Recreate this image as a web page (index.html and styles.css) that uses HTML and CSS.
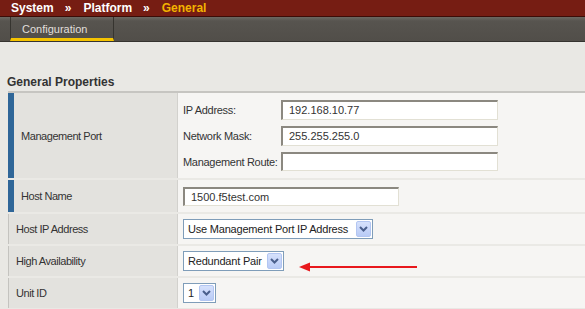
FILE: index.html
```html
<!DOCTYPE html>
<html>
<head>
<meta charset="utf-8">
<link rel="stylesheet" href="styles.css">
</head>
<body>
<div class="crumbs">
  <span class="crumb">System</span><span class="sep">»</span><span class="crumb">Platform</span><span class="sep">»</span><span class="crumb current">General</span>
</div>
<div class="tabs">
  <div class="tab active">Configuration</div>
</div>
<div class="content">
  <h2 class="section-title">General Properties</h2>
  <div class="props">
    <div class="row">
      <div class="label marked">Management Port</div>
      <div class="value mgmt">
        <div class="subgrid">
          <div class="sublabel">IP Address:</div>
          <div class="input w-wide">192.168.10.77</div>
          <div class="sublabel">Network Mask:</div>
          <div class="input w-wide">255.255.255.0</div>
          <div class="sublabel">Management Route:</div>
          <div class="input w-wide route"></div>
        </div>
      </div>
    </div>
    <div class="row">
      <div class="label marked">Host Name</div>
      <div class="value host">
        <div class="input w-host">1500.f5test.com</div>
      </div>
    </div>
    <div class="row">
      <div class="label">Host IP Address</div>
      <div class="value sel">
        <div class="select w-ip"><span class="sel-text">Use Management Port IP Address</span><span class="sel-btn"><svg width="9" height="6" viewBox="0 0 9 6"><path d="M1 1 L4.5 4.5 L8 1" fill="none" stroke="#4a5f8c" stroke-width="2"/></svg></span></div>
      </div>
    </div>
    <div class="row">
      <div class="label">High Availability</div>
      <div class="value sel">
        <div class="select w-ha"><span class="sel-text">Redundant Pair</span><span class="sel-btn"><svg width="9" height="6" viewBox="0 0 9 6"><path d="M1 1 L4.5 4.5 L8 1" fill="none" stroke="#4a5f8c" stroke-width="2"/></svg></span></div>
      </div>
    </div>
    <div class="row last">
      <div class="label">Unit ID</div>
      <div class="value sel">
        <div class="select w-unit"><span class="sel-text">1</span><span class="sel-btn"><svg width="9" height="6" viewBox="0 0 9 6"><path d="M1 1 L4.5 4.5 L8 1" fill="none" stroke="#4a5f8c" stroke-width="2"/></svg></span></div>
      </div>
    </div>
  </div>
</div>
<svg class="arrow" width="122" height="14" viewBox="0 0 122 14">
  <line x1="10" y1="6" x2="119" y2="6" stroke="#e8181c" stroke-width="2"/>
  <polygon points="1,6 12,1.5 12,10.5" fill="#e8181c"/>
</svg>
</body>
</html>
```
FILE: styles.css
```css
html, body {
  margin: 0;
  padding: 0;
  background: #e9e8e4;
  font-family: "Liberation Sans", Arial, sans-serif;
  overflow: hidden;
}
.crumbs {
  height: 16px;
  line-height: 16px;
  background: #761d13;
  border-bottom: 1px solid #3c0c07;
  padding-left: 11px;
  font-size: 12px;
  font-weight: bold;
  color: #ffffff;
  display: flex;
}
.sep {
  margin: 0 12px 0 11px;
}
.crumb.current {
  color: #f3b300;
}
.tabs {
  height: 24px;
  background: linear-gradient(#6b6862 0px, #57544f 4px, #514e49 100%);
  border-bottom: 1px solid #35332f;
  display: flex;
  padding-left: 10px;
}
.tab {
  box-sizing: border-box;
  width: 104px;
  height: 24px;
  border-left: 1px solid #36342f;
  border-right: 1px solid #36342f;
  padding: 6px 0 0 11px;
  font-size: 11px;
  line-height: 13px;
  color: #e0dfdb;
}
.tab.active {
  border-bottom: 3px solid #f5c300;
}
.content {
  padding-top: 33px;
}
.section-title {
  margin: 0 0 2px 7px;
  font-size: 12px;
  line-height: 14px;
  font-weight: bold;
  color: #333333;
}
.props {
  margin-left: 8px;
  border-top: 2px solid #c6c5c1;
}
.row {
  display: grid;
  grid-template-columns: 169px 1fr;
  border-bottom: 2px solid #eae9e5;
}
.row.last {
  border-bottom: none;
}
.label {
  box-sizing: border-box;
  background: #e3e2de;
  border-left: 1px solid #c4c3bf;
  padding-left: 7px;
  display: flex;
  align-items: center;
  font-size: 11px;
  letter-spacing: -0.45px;
  color: #333333;
}
.label.marked {
  border-left: 6px solid #2f6698;
}
.value {
  background: #f6f5f3;
  border-left: 1px solid #d2d1cd;
  padding-left: 5px;
}
.value.mgmt {
  padding-top: 7px;
  padding-bottom: 7px;
}
.value.host {
  padding-top: 7px;
  padding-bottom: 6px;
}
.value.sel {
  padding-top: 5px;
  padding-bottom: 5px;
}
.subgrid {
  display: grid;
  grid-template-columns: 98px 217px;
  row-gap: 6px;
  align-items: center;
}
.sublabel {
  font-size: 11px;
  letter-spacing: -0.3px;
  color: #333333;
}
.input {
  box-sizing: border-box;
  height: 20px;
  background: #ffffff;
  border-top: 2px solid #8b8880;
  border-left: 2px solid #8b8880;
  border-right: 1px solid #e2e0d4;
  border-bottom: 1px solid #e2e0d4;
  padding-left: 6px;
  font-size: 11px;
  line-height: 17px;
  color: #333333;
}
.input.route {
  height: 19px;
}
.w-wide {
  width: 217px;
}
.w-host {
  width: 216px;
  height: 19px;
  line-height: 16px;
}
.select {
  box-sizing: border-box;
  height: 20px;
  background: #ffffff;
  border: 1px solid #7f9db9;
  display: flex;
  align-items: center;
  justify-content: space-between;
  padding-left: 4px;
  padding-right: 1px;
  font-size: 11px;
  letter-spacing: -0.2px;
  color: #222222;
}
.w-ip { width: 190px; }
.w-ha { width: 101px; }
.w-unit { width: 33px; }
.sel-btn {
  box-sizing: border-box;
  width: 15px;
  height: 16px;
  border: 1px solid #b3c6f2;
  border-radius: 2px;
  background: linear-gradient(#d6e1fc, #b9cbf6);
  display: flex;
  align-items: center;
  justify-content: center;
}
.arrow {
  position: absolute;
  left: 298px;
  top: 261px;
}
```
